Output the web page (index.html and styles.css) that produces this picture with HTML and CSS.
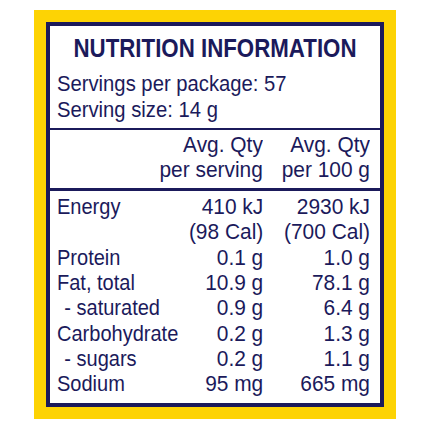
FILE: index.html
```html
<!DOCTYPE html>
<html lang="en">
  <head>
    <meta charset="UTF-8" />
    <title>Nutrition Information</title>
    <link rel="stylesheet" href="styles.css">
  </head>
  <body>
    <div class="label">
      <div class="panel">
        <h1>NUTRITION INFORMATION</h1>
        <div class="servings">
          <p>Servings per package: 57</p>
          <p>Serving size: 14 g</p>
        </div>
        <div class="grid head">
          <span></span>
          <span class="num">Avg. Qty<br />per serving</span>
          <span class="num">Avg. Qty<br />per 100 g</span>
        </div>
        <div class="grid rows">
          <span class="name">Energy</span>
          <span class="num">410 kJ<br />(98 Cal)</span>
          <span class="num">2930 kJ<br />(700 Cal)</span>

          <span class="name">Protein</span>
          <span class="num">0.1 g</span>
          <span class="num">1.0 g</span>

          <span class="name">Fat, total</span>
          <span class="num">10.9 g</span>
          <span class="num">78.1 g</span>

          <span class="name sub">- saturated</span>
          <span class="num">0.9 g</span>
          <span class="num">6.4 g</span>

          <span class="name">Carbohydrate</span>
          <span class="num">0.2 g</span>
          <span class="num">1.3 g</span>

          <span class="name sub">- sugars</span>
          <span class="num">0.2 g</span>
          <span class="num">1.1 g</span>

          <span class="name">Sodium</span>
          <span class="num">95 mg</span>
          <span class="num">665 mg</span>
        </div>
      </div>
    </div>
  </body>
</html>
```

FILE: styles.css
```css
body {
  margin: 0;
  background: #ffffff;
  font-family: "Liberation Sans", Arial, sans-serif;
  color: #1b1a5b;
}

.label {
  margin: 10px 0 0 34px;
  width: 362px;
  padding: 12px;
  box-sizing: border-box;
  background: #fdd304;
}

.panel {
  border: 4px solid #1b1a5b;
  background: #ffffff;
}

/* the label face is a condensed grotesk, so the text is squeezed */
h1 {
  margin: 0;
  padding: 7px 0 8px;
  font-size: 25.5px;
  line-height: 30px;
  font-weight: bold;
  text-align: center;
  white-space: nowrap;
  transform: scaleX(0.874);
}

.servings {
  padding: 0 7px 5px;
  border-bottom: 2px solid #1b1a5b;
}

.servings p {
  margin: 0;
  font-size: 22px;
  line-height: 25.8px;
  white-space: nowrap;
  transform: scaleX(0.92);
  transform-origin: left center;
}

.grid {
  display: grid;
  grid-template-columns: minmax(0, 1fr) auto 107px;
  padding: 0 10px 0 7px;
  font-size: 22px;
  line-height: 25.3px;
  white-space: nowrap;
}

.head {
  padding-top: 2px;
  padding-bottom: 6px;
  border-bottom: 3px solid #1b1a5b;
}

.rows {
  padding-top: 3px;
  padding-bottom: 6px;
}

.name {
  transform: scaleX(0.91);
  transform-origin: left center;
}

.sub {
  padding-left: 8px;
}

.num {
  text-align: right;
  transform: scaleX(0.95);
  transform-origin: right center;
}
```
